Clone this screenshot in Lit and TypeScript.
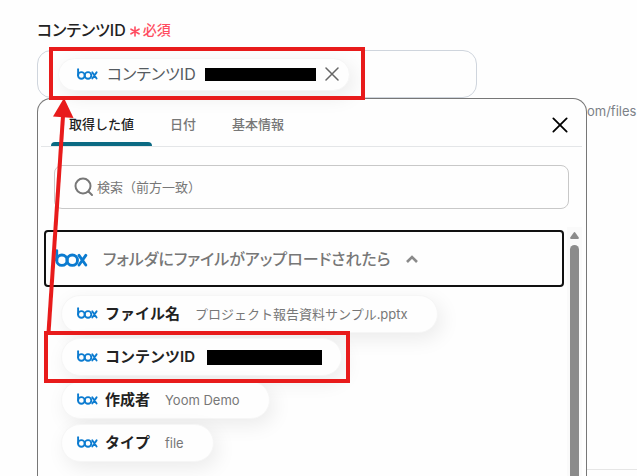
import { LitElement, html, css, svg, nothing } from "lit";
import { customElement, property, state } from "lit/decorators.js";
import { classMap } from "lit/directives/class-map.js";

interface Item {
  name: string;
  value?: string;
  marked?: boolean;
}

const ITEMS: Item[] = [
  { name: "ファイル名", value: "プロジェクト報告資料サンプル.pptx" },
  { name: "コンテンツID", marked: true },
  { name: "作成者", value: "Yoom Demo" },
  { name: "タイプ", value: "file" },
];

const TABS = ["取得した値", "日付", "基本情報"];

@customElement("box-logo")
export class BoxLogo extends LitElement {
  @property({ type: Boolean, reflect: true }) large = false;

  static styles = css`
    :host {
      display: block;
      flex: none;
      width: 21px;
      height: 12px;
    }
    :host([large]) {
      width: 33px;
      height: 18px;
    }
    svg {
      display: block;
      width: 100%;
      height: 100%;
    }
  `;

  render() {
    return html`<svg viewBox="0 0 33 18" fill="none" stroke="#0b7bd0" stroke-width="2.9" stroke-linecap="round" role="img" aria-label="box">
      <path d="M1.7 1.6V11.2" />
      <circle cx="6.9" cy="11.2" r="5.2" />
      <circle cx="17.3" cy="11.2" r="5.2" />
      <path d="M24 6.4L30.8 16M30.8 6.4L24 16" />
    </svg>`;
  }
}

const cross = svg`<path d="M2 2L14 14M14 2L2 14" />`;

@customElement("app-root")
export class AppRoot extends LitElement {
  @state() private tab = 0;
  @state() private open = true;

  static styles = css`
    :host {
      display: flex;
      flex-direction: column;
      position: relative;
      box-sizing: border-box;
      height: 100vh;
      overflow: hidden;
      padding: 20px 0 0 37px;
      background: #fefefe;
      color: #222;
      font-family: Inter, "Noto Sans CJK JP", sans-serif;
      font-size: 13px;
      line-height: 20px;
    }
    * {
      box-sizing: border-box;
    }
    button {
      margin: 0;
      padding: 0;
      border: 0;
      background: none;
      font: inherit;
      color: inherit;
      cursor: pointer;
    }
    svg {
      display: block;
      flex: none;
    }
    .heading {
      display: flex;
      align-items: center;
      gap: 4px;
      margin: 0 0 10px;
      font-size: 16px;
      font-weight: 500;
      font-feature-settings: "palt";
      white-space: nowrap;
    }
    .required {
      display: flex;
      align-items: center;
      gap: 3px;
      color: #ff4d61;
      font-size: 14px;
    }
    .field {
      position: relative;
      z-index: 2;
      display: flex;
      align-items: center;
      width: 80%;
      max-width: 440px;
      height: 48px;
      flex: none;
      padding: 0 20px;
      border: 1px solid #cfd5dd;
      border-radius: 14px;
    }
    .chip {
      position: relative;
      display: flex;
      align-items: center;
      width: max-content;
      height: 38px;
      padding: 0 29px 0 15px;
      border: 1px solid #f6f6f6;
      border-radius: 19px;
      background: #fefefe;
      box-shadow: 4px 6px 20px rgba(0, 0, 0, 0.08);
      white-space: nowrap;
    }
    .chip.selected {
      height: 33px;
      padding: 0 10px 0 18px;
      gap: 9px;
      color: #555b61;
      font-size: 16px;
      font-feature-settings: "palt";
    }
    .marked::after {
      content: "";
      position: absolute;
      z-index: 1;
      inset: -8px -9px -8px -18px;
      border: 4px solid #e81b1b;
      pointer-events: none;
    }
    .selected.marked::after {
      inset: -12px -16px -10px -10px;
    }
    .item box-logo,
    .group box-logo {
      margin-bottom: 2px;
    }
    .name {
      margin-left: 7px;
      color: #222;
      font-size: 15px;
      font-weight: 600;
    }
    .value {
      margin-left: 15px;
      color: #777;
    }
    .redacted {
      width: 115px;
      height: 15px;
      margin-left: 12px;
      background: #000;
    }
    .item.marked {
      padding-right: 19px;
    }
    .selected .redacted {
      width: 111px;
      height: 13px;
      margin: 0;
    }
    .remove {
      color: #666;
    }
    .lower {
      display: grid;
      grid-template-columns: minmax(0, 550px) minmax(50px, 1fr);
      flex: 1;
      min-height: 0;
    }
    .panel {
      display: flex;
      flex-direction: column;
      min-height: 0;
      padding: 0 4px 0 3px;
      border: 1px solid #777;
      border-bottom: 0;
      border-radius: 14px 14px 0 0;
      background: #fefefe;
      z-index: 1;
    }
    .tabs {
      display: flex;
      flex: none;
      height: 48px;
      padding: 0 12px 0 10px;
      border-bottom: 1px solid #e4e6e8;
    }
    .tab {
      position: relative;
      padding: 2px 18px 0;
      color: #777;
      font-weight: 500;
    }
    .tab.active {
      color: #222;
    }
    .tab.active::after {
      content: "";
      position: absolute;
      inset: auto 0 0;
      height: 4px;
      border-radius: 4px 4px 0 0;
      background: #0b6a83;
    }
    .close {
      margin: 5px 0 0 auto;
      color: #000;
    }
    .search {
      display: flex;
      align-items: center;
      flex: none;
      gap: 3px;
      height: 44px;
      margin: 18px 13px 18px;
      padding: 0 20px 0 19px;
      border: 1px solid #c8c8c8;
      border-radius: 8px;
      color: #777;
    }
    .search input {
      flex: 1;
      min-width: 0;
      padding: 0;
      border: 0;
      outline: 0;
      background: none;
      font: inherit;
      color: #222;
    }
    .search input::placeholder {
      color: #777;
      opacity: 1;
    }
    .scroller {
      display: flex;
      flex: 1;
      min-height: 0;
    }
    .list {
      flex: 1;
      min-width: 0;
      padding: 3px;
      overflow: hidden;
    }
    .group {
      display: flex;
      align-items: center;
      width: 100%;
      height: 57px;
      padding: 0 9px;
      border: 2px solid #111;
      border-radius: 4px;
      color: #777;
      font-size: 16px;
      font-weight: 500;
      white-space: nowrap;
    }
    .group-title {
      margin: 0 15px;
      font-feature-settings: "palt";
    }
    .items {
      display: grid;
      gap: 5px;
      margin: 8px 0 0;
      padding: 0 0 0 17px;
      list-style: none;
    }
    .bar {
      display: flex;
      flex-direction: column;
      align-items: center;
      gap: 6px;
      width: 15px;
      padding-top: 5px;
      background: #fafafa;
    }
    .thumb {
      flex: 1;
      width: 9px;
      border-radius: 5px 5px 0 0;
      background: #8b8b8b;
    }
    .behind {
      display: flex;
      flex-direction: column;
      justify-content: space-between;
      padding: 3px 0 6px;
      color: #7c8187;
    }
    .behind hr {
      width: 100%;
      margin: 0;
      border: 0;
      border-top: 1px solid #e6e6e6;
    }
    .arrow {
      position: absolute;
      left: 40px;
      top: 96px;
      z-index: 2;
      pointer-events: none;
    }
  `;

  private chip(item: Item) {
    return html`<li class=${classMap({ chip: true, item: true, marked: !!item.marked })}>
      <box-logo></box-logo>
      <span class="name">${item.name}</span>
      ${item.value ? html`<span class="value">${item.value}</span>` : html`<span class="redacted"></span>`}
    </li>`;
  }

  render() {
    return html`
      <h1 class="heading">
        コンテンツID
        <span class="required">
          <svg width="10" height="14" viewBox="0 0 10 14" stroke="currentColor" stroke-width="1.6" stroke-linecap="round">
            <path d="M5 4V13M1 6.2L9 10.8M9 6.2L1 10.8" />
          </svg>
          必須
        </span>
      </h1>
      <div class="field">
        <div class="chip selected marked">
          <box-logo></box-logo>
          <span>コンテンツID</span>
          <span class="redacted"></span>
          <button class="remove" aria-label="削除">
            <svg width="14" height="14" viewBox="1 1 14 14" stroke="currentColor" stroke-width="1.5" stroke-linecap="round">${cross}</svg>
          </button>
        </div>
      </div>
      <div class="lower">
        <section class="panel">
          <div class="tabs" role="tablist">
            ${TABS.map(
              (t, i) => html`<button
                role="tab"
                aria-selected=${i === this.tab}
                class=${classMap({ tab: true, active: i === this.tab })}
                @click=${() => (this.tab = i)}
              >${t}</button>`
            )}
            <button class="close" aria-label="閉じる">
              <svg width="20" height="20" viewBox="-1 -1 18 18" stroke="currentColor" stroke-width="1.6" stroke-linecap="round">${cross}</svg>
            </button>
          </div>
          <label class="search">
            <svg width="20" height="20" viewBox="0 0 20 20" fill="none" stroke="currentColor" stroke-width="2" stroke-linecap="round">
              <circle cx="9" cy="9" r="7.5" />
              <path d="M14.5 14.5L18 18" />
            </svg>
            <input type="text" placeholder="検索（前方一致）" aria-label="検索" />
          </label>
          <div class="scroller">
            <div class="list">
              <button class="group" aria-expanded=${this.open} @click=${() => (this.open = !this.open)}>
                <box-logo large></box-logo>
                <span class="group-title">フォルダにファイルがアップロードされたら</span>
                <svg width="12" height="8" viewBox="0 0 12 8" fill="none" stroke="#8a8a8a" stroke-width="2.6">
                  <path d="M1 7L6 2L11 7" />
                </svg>
              </button>
              ${this.open ? html`<ul class="items">${ITEMS.map((i) => this.chip(i))}</ul>` : nothing}
            </div>
            <div class="bar">
              <svg width="9" height="7" viewBox="0 0 9 7" fill="#8b8b8b"><path d="M3.6 .7Q4.5 -.5 5.4 .7L8.8 5.6Q9 7 8 7H1Q0 7 .2 5.6Z" /></svg>
              <div class="thumb"></div>
            </div>
          </div>
        </section>
        <div class="behind">
          <span>om/files</span>
          <hr />
        </div>
      </div>
      <svg class="arrow" width="36" height="240" viewBox="0 0 36 240" fill="#e81b1b">
        <path d="M24 2L33.500 22L13 20.500Z" />
        <path d="M23 20L8.500 237" stroke="#e81b1b" stroke-width="4" />
      </svg>
    `;
  }
}
